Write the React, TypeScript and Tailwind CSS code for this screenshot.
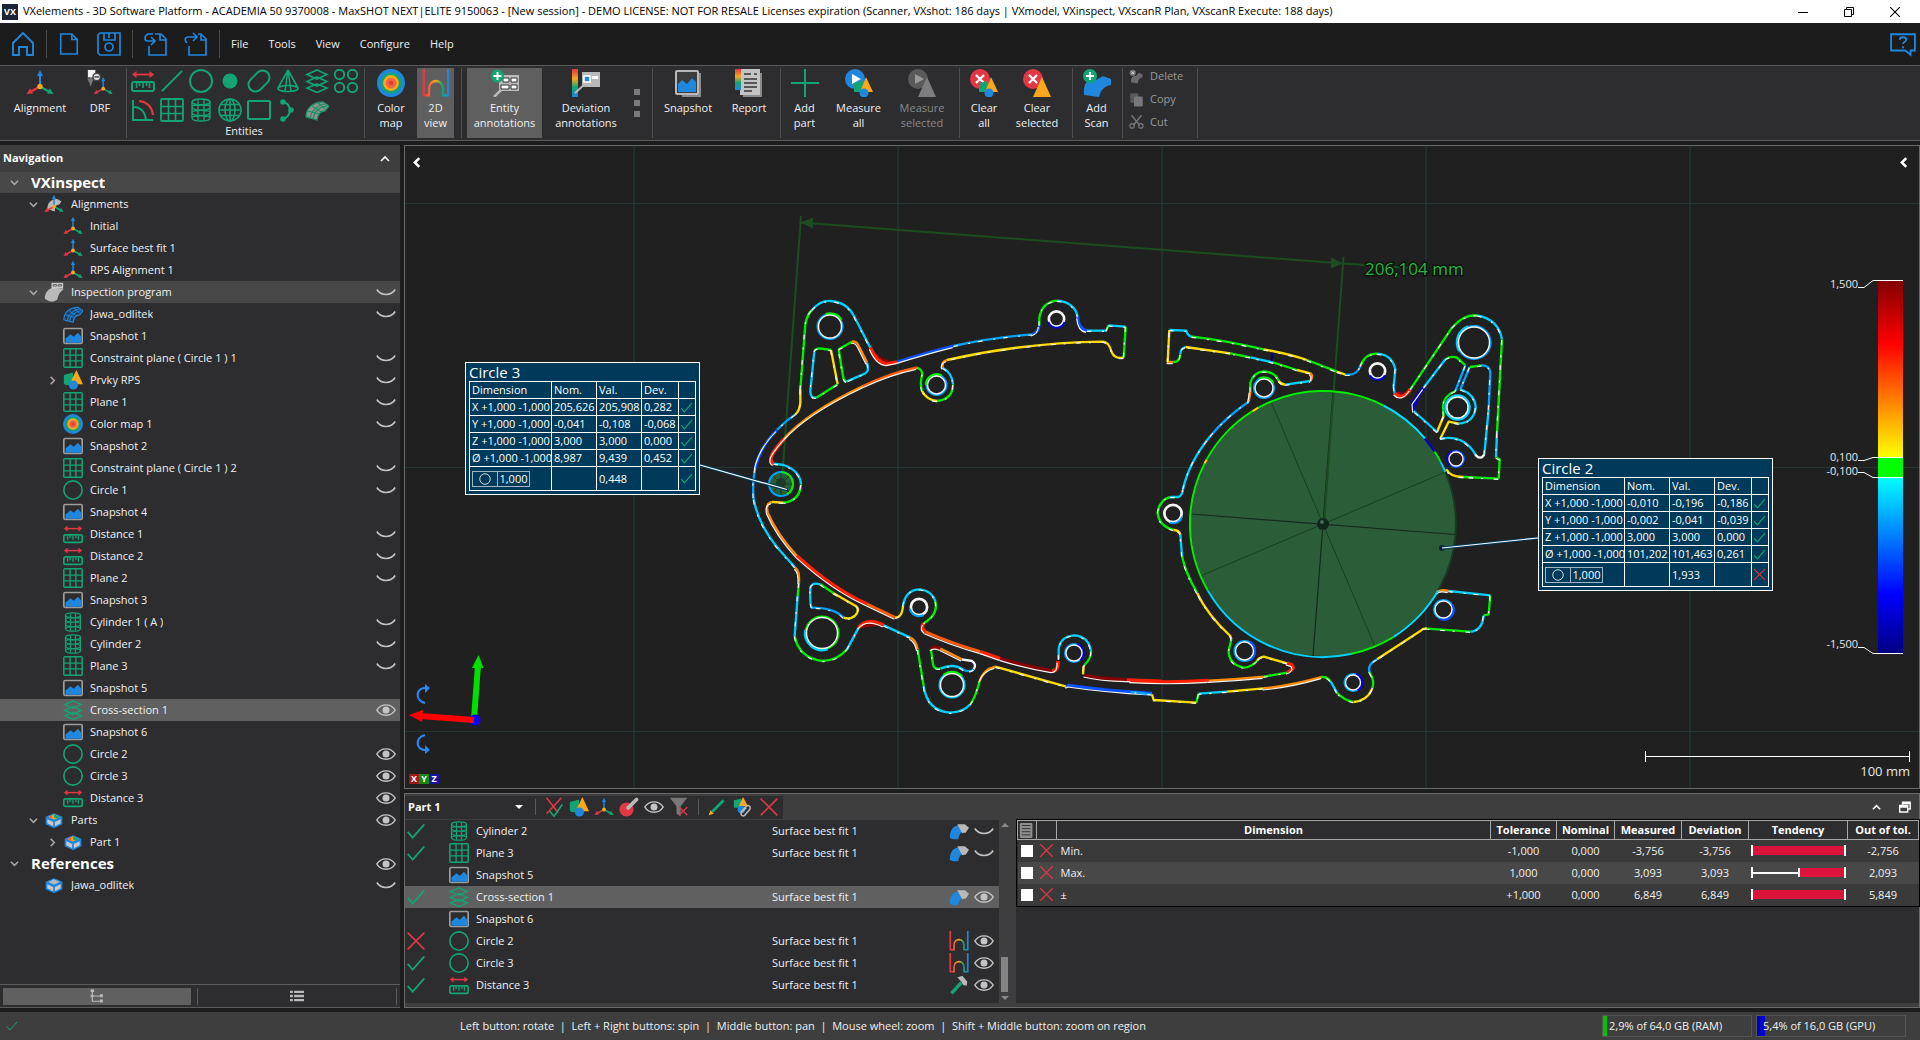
import React from "react";

/* ---------- icons ---------- */

type IconProps = { className?: string };
const G = "#12a573";
const B = "#1f87dd";
const R = "#e23744";
const O = "#fba71b";
const N = "#b9b9b9";

function Svg({ className = "size-5", children, box = "0 0 24 24" }: { className?: string; children: React.ReactNode; box?: string }) {
  return (
    <svg viewBox={box} className={`${className} shrink-0`} fill="none" stroke="none" strokeWidth={1.6} aria-hidden="true">
      {children}
    </svg>
  );
}

const AxesShape = () => (
  <>
    <path d="M12 15V5" stroke={B} strokeWidth={1.8} />
    <path d="M12 1l2.6 5H9.4z" fill={B} />
    <path d="M12 15l-8 4.5" stroke={R} strokeWidth={1.8} />
    <path d="M.5 21.5l3-5 2.600 4.500z" fill={R} />
    <path d="M12 15l8 4.500" stroke={G} strokeWidth={1.800} />
    <path d="M23.500 21.500l-3-5-2.600 4.500z" fill={G} />
    <circle cx="12" cy="15" r="2.300" fill={O} />
  </>
);
const Axes = ({ className }: IconProps) => <Svg className={className}><AxesShape /></Svg>;
const AxesPart = ({ className }: IconProps) => (
  <Svg className={className}><path d="M4 18c0-7 4-12 12-12l5 3-3 4c-4 0-5 3-5 8z" fill={N} /><AxesShape /></Svg>
);
const Drf = ({ className }: IconProps) => (
  <Svg className={className} box="0 0 28 30">
    <path d="M4 7v11M1.500 11l2.500 5 2.500-5z" stroke="#777" fill="#666" />
    <rect x="1" y="1" width="8" height="8" fill="#f2f2f2" />
    <circle cx="10.500" cy="8.500" r="4" fill="#e5e5e5" stroke="#444" /><path d="M8 8.500h5" stroke="#444" />
    <g transform="translate(7 8) scale(.87)"><AxesShape /></g>
  </Svg>
);
const Ruler = ({ className }: IconProps) => (
  <Svg className={className}>
    <path d="M3 5.500h18" stroke={R} strokeWidth={1.800} />
    <path d="M1 5.500l4.500-3.500v7zM23 5.500L18.500 2v7z" fill={R} />
    <rect x="1" y="13" width="22" height="9" rx="2" stroke={G} strokeWidth={2} />
    <path d="M5.500 14v5M8.500 14v3M12 14v5M15.500 14v3M18.500 14v5" stroke={G} />
  </Svg>
);
const LineI = ({ className }: IconProps) => <Svg className={className}><path d="M2 22L22 2" stroke={G} strokeWidth={1.800} /></Svg>;
const CircleI = ({ className }: IconProps) => <Svg className={className}><circle cx="12" cy="12" r="11" stroke={G} strokeWidth={1.900} /></Svg>;
const PointI = ({ className }: IconProps) => <Svg className={className}><circle cx="12" cy="12" r="7.500" fill={G} /></Svg>;
const SlotI = ({ className }: IconProps) => (
  <Svg className={className}><rect x="5" y="0" width="14" height="24" rx="7" transform="rotate(45 12 12)" stroke={G} strokeWidth={2} /></Svg>
);
const ConeI = ({ className }: IconProps) => (
  <Svg className={className}>
    <path d="M12 1L2 19M12 1l10 18M12 1L9 22M12 1l3 21" stroke={G} /><ellipse cx="12" cy="19.500" rx="10" ry="3" stroke={G} />
  </Svg>
);
const Layers = ({ className }: IconProps) => (
  <Svg className={className}>
    <path d="M12 1l10 4.500L12 10 2 5.500zM12 8l10 4.500L12 17 2 12.500zM12 15l10 4-10 4.500L2 19z" stroke={G} strokeWidth={1.700} />
  </Svg>
);
const FourCircles = ({ className }: IconProps) => (
  <Svg className={className}>
    {[5.5, 18.5].map((x) => [5.5, 18.5].map((y) => <circle key={`${x}-${y}`} cx={x} cy={y} r="4.700" stroke={G} strokeWidth={1.900} />))}
  </Svg>
);
const AngleI = ({ className }: IconProps) => (
  <Svg className={className}>
    <path d="M2 2v20h20M2 9c8 0 12 5 13 13" stroke={G} strokeWidth={1.900} /><path d="M8 3c8 1 13 6 14 14" stroke={R} strokeWidth={2.200} />
  </Svg>
);
const GridI = ({ className }: IconProps) => (
  <Svg className={className}>
    <rect x="1" y="1" width="22" height="22" stroke={G} strokeWidth={1.800} rx="1" /><path d="M8.500 1v22M15.500 1v22M1 8.500h22M1 15.500h22" stroke={G} />
  </Svg>
);
const Cylinder = ({ className }: IconProps) => (
  <Svg className={className}>
    <ellipse cx="12" cy="4" rx="9" ry="3" stroke={G} />
    <path d="M3 4v16c0 4 18 4 18 0V4M3 9c0 4 18 4 18 0M3 14.500c0 4 18 4 18 0M3 9c0-3 18-3 18 0M3 14.500c0-3 18-3 18 0M3 20c0-3 18-3 18 0M9 2v20M15 2v20" stroke={G} strokeWidth={1.400} />
  </Svg>
);
const Sphere = ({ className }: IconProps) => (
  <Svg className={className}>
    <circle cx="12" cy="12" r="11" stroke={G} /><ellipse cx="12" cy="12" rx="5" ry="11" stroke={G} />
    <path d="M12 1v22M1 12h22M3 6.500h18M3 17.500h18" stroke={G} />
  </Svg>
);
const RectI = ({ className }: IconProps) => <Svg className={className}><rect x="1" y="3" width="22" height="18" rx="1" stroke={G} strokeWidth={2} /></Svg>;
const CurveI = ({ className }: IconProps) => (
  <Svg className={className}>
    <path d="M7 4c9 2 9 14 0 17" stroke={G} strokeWidth={2} />
    <circle cx="7" cy="4" r="2.800" fill={G} /><circle cx="15" cy="12" r="2.800" fill={G} /><circle cx="7" cy="21" r="2.800" fill={G} />
  </Svg>
);
const MeshSurface = ({ className, fill = "#8f9692", line = "#1f8f66" }: IconProps & { fill?: string; line?: string }) => (
  <Svg className={className}>
    <path d="M1 19C1 10 8 4 18 4l6 4-4 5c-5 0-7 3-8 9z" fill={fill} stroke={line} strokeWidth={1.300} />
    <path d="M3 13l11 3M7 8l9 6M13 5l7 6M5 21C6 13 12 7 20 6M8 21c1-8 7-12 14-13" stroke={line} strokeWidth={1.200} />
  </Svg>
);
const ColorMap = ({ className }: IconProps) => (
  <Svg className={className}>
    <circle cx="12" cy="12" r="12" fill={B} /><circle cx="12" cy="12" r="9" fill={G} /><circle cx="12" cy="12" r="6.800" fill={O} />
    <circle cx="12" cy="12" r="4.500" fill="#f5653c" /><circle cx="12" cy="12" r="2" fill={R} />
  </Svg>
);
const View2D = ({ className }: IconProps) => (
  <Svg className={className}>
    <defs>
      <linearGradient id="v2d" x1="0" x2="1" y1="0" y2="0">
        <stop offset="0" stopColor={R} /><stop offset=".25" stopColor="#f5653c" /><stop offset=".5" stopColor={O} /><stop offset=".75" stopColor={G} /><stop offset="1" stopColor={B} />
      </linearGradient>
    </defs>
    <path d="M1.500 0v22.500h4.500V17c0-9 12-9 12 0v5.500h4.500V0" stroke="url(#v2d)" strokeWidth={2} />
  </Svg>
);
const EntityAnn = ({ className }: IconProps) => (
  <Svg className={className} box="0 0 28 28">
    <path d="M3 28l8-8" stroke={N} strokeWidth={2.500} /><path d="M8 6h20v16H10l-2-2z" fill={N} />
    <path d="M12 9h6v4h-6zM20 9h6v4h-6zM10 16h8v4h-8zM20 16h6v4h-6z" fill="#fff" stroke="#333" strokeWidth={1} />
    <circle cx="6.500" cy="7" r="6.500" fill={G} /><path d="M6.500 3v8M2.500 7h8" stroke="#fff" strokeWidth={2} />
  </Svg>
);
const DeviationAnn = ({ className }: IconProps) => (
  <Svg className={className} box="0 0 28 28">
    <defs>
      <linearGradient id="dev" x1="0" x2="0" y1="0" y2="1">
        <stop offset="0" stopColor={R} /><stop offset=".35" stopColor={O} /><stop offset=".65" stopColor={G} /><stop offset="1" stopColor={B} />
      </linearGradient>
    </defs>
    <rect x="0" y="0" width="6" height="28" fill="url(#dev)" />
    <path d="M3 24l10-9" stroke={N} strokeWidth={2} /><rect x="10" y="3" width="18" height="15" fill={N} />
    <rect x="12" y="7" width="6" height="6" fill={B} stroke="#fff" /><path d="M20 7h6v3h-6z" fill="#fff" />
  </Svg>
);
const SnapshotBig = ({ className }: IconProps) => (
  <Svg className={className} box="0 0 28 28">
    <path d="M6 4h21v24H8z" fill="#8b8b8b" /><rect x="2" y="2" width="22" height="23" rx="1" fill="#3c3c3c" stroke={N} strokeWidth={2} />
    <path d="M4 23V15l4-4 5 4 5-6 4 4v10z" fill={B} />
  </Svg>
);
const Snapshot = ({ className }: IconProps) => (
  <Svg className={className}>
    <rect x="1" y="3" width="22" height="18" rx="1.500" stroke="#9c9c9c" strokeWidth={2} />
    <path d="M3 20v-5l6-5 4 3 5-5 4 5v7z" fill={B} />
  </Svg>
);
const ReportI = ({ className }: IconProps) => (
  <Svg className={className} box="0 0 28 28">
    <path d="M8 4h19v24H8z" fill="#8b8b8b" /><rect x="5" y="0" width="20" height="26" fill="#c4c4c4" />
    <rect x="0" y="0" width="6" height="21" fill="url(#dev)" />
    <path d="M9 5h7M19 5h3M9 10h13M9 14h13M9 18h13M9 22h8" stroke="#333" strokeWidth={1.700} />
  </Svg>
);
const PlusI = ({ className }: IconProps) => <Svg className={className} box="0 0 28 28"><path d="M14 0v28M0 14h28" stroke={G} strokeWidth={2} /></Svg>;
const Shapes = ({ dim = false, cube = true }: { dim?: boolean; cube?: boolean }) => (
  <>
    {cube && <path d="M9 14l9-2v11H9z" fill={dim ? "#777" : G} />}
    <path d={cube ? "M21 8l7 15H15z" : "M19 8l9 20H10z"} fill={dim ? "#7d7d7d" : O} />
    {cube && <circle cx="19" cy="24" r="4.500" fill={dim ? "#777" : B} />}
  </>
);
const MeasureI = ({ className, dim = false }: IconProps & { dim?: boolean }) => (
  <Svg className={className} box="0 0 28 28">
    <circle cx="10" cy="10" r="10" fill={dim ? "#5a5a5a" : B} /><path d="M7 5l9 5-9 5z" fill={dim ? "#999" : "#fff"} />
    <Shapes dim={dim} cube={!dim} />
  </Svg>
);
const ClearI = ({ className, all = false }: IconProps & { all?: boolean }) => (
  <Svg className={className} box="0 0 28 28">
    <circle cx="10" cy="10" r="10" fill={R} /><path d="M6 6l8 8M14 6l-8 8" stroke="#fff" strokeWidth={2.200} /><Shapes cube={all} />
  </Svg>
);
const AddScan = ({ className }: IconProps) => (
  <Svg className={className} box="0 0 28 28">
    <path d="M1 26C0 12 6 10 13 11l7-4 8 3v6c-6 1-10 4-12 12z" fill={B} />
    <circle cx="7" cy="7" r="7" fill={G} /><path d="M7 3v8M3 7h8" stroke="#fff" strokeWidth={2} />
  </Svg>
);
const DeleteI = ({ className }: IconProps) => (
  <Svg className={className}><path d="M3 21c0-8 3-10 8-10l5-5 6 3-1 5c-5 0-6 4-7 9z" fill="#6b6b6b" /><circle cx="6" cy="6" r="5" fill="#777" /><path d="M4 4l4 4M8 4L4 8" stroke="#ddd" /></Svg>
);
const CopyI = ({ className }: IconProps) => (
  <Svg className={className}><rect x="2" y="2" width="13" height="15" rx="2" fill="#585858" /><rect x="8" y="7" width="14" height="16" rx="2" fill="#777" /></Svg>
);
const CutI = ({ className }: IconProps) => (
  <Svg className={className}><path d="M4 2l13 16M20 2L7 18" stroke="#777" strokeWidth={2.200} /><circle cx="5" cy="19" r="3.500" stroke="#777" strokeWidth={2} /><circle cx="19" cy="19" r="3.500" stroke="#777" strokeWidth={2} /></Svg>
);
const Program = ({ className }: IconProps) => (
  <Svg className={className}>
    <path d="M1 20C1 12 6 8 11 7l13 2c-5 2-7 7-8 12-4 3-8 4-15-1z" fill={N} />
    <rect x="9" y="1" width="14" height="7" fill="#ccc" /><path d="M11 3h4v2h-4zM17 3h4v2h-4z" stroke="#555" strokeWidth={1} />
  </Svg>
);
const Feature = ({ className }: IconProps) => (
  <Svg className={className}>
    <path d="M1 6l11-3v13c-3 2-9 4-11 0z" fill={G} /><path d="M16 0l8 17H8z" fill={O} /><circle cx="12.500" cy="18" r="5.500" fill={B} />
  </Svg>
);
const PartI = ({ className, colored = true }: IconProps & { colored?: boolean }) => (
  <Svg className={className}>
    <path d="M12 4l10 4v9l-10 5-10-5V8z" fill={B} />
    <path d="M12 5l7 3.500-7 3-7-3z" fill={colored ? O : N} />{colored && <path d="M12 5l7 3.500-4 1.700-3-1.200z" fill={G} />}
    {colored && <path d="M5 8.500l5-2.500v5z" fill="#f5653c" />}
    <path d="M4 11l7 3.500v5L4 16zM20 11l-7 3.500v5l7-3.500z" fill="#c9c9c9" />
  </Svg>
);
const Eye = ({ className }: IconProps) => (
  <Svg className={className}>
    <path d="M1 12C6 2.500 18 2.500 23 12 18 21.500 6 21.500 1 12z" stroke="#c4c4c4" strokeWidth={1.900} transform="translate(0 1.500) scale(1 .88)" />
    <circle cx="12" cy="12" r="4.200" fill="#c4c4c4" />
  </Svg>
);
const EyeClosed = ({ className }: IconProps) => (
  <Svg className={className}><path d="M1 9c5 8 17 8 22 0" stroke="#c4c4c4" strokeWidth={1.900} /></Svg>
);
const Check = ({ className }: IconProps) => <Svg className={className}><path d="M2 13l6 7L22 4" stroke={G} strokeWidth={2} /></Svg>;
const Cross = ({ className }: IconProps) => <Svg className={className}><path d="M2 2l20 20M22 2L2 22" stroke={R} strokeWidth={1.900} /></Svg>;
const CheckCross = ({ className }: IconProps) => (
  <Svg className={className}><path d="M3 1l14 18M21 1L3 20" stroke={R} strokeWidth={1.800} /><path d="M7 17l5 6L22 9" stroke={G} strokeWidth={2} /></Svg>
);
const Probe = ({ className }: IconProps) => (
  <Svg className={className}><circle cx="9" cy="15" r="8.500" fill={R} /><path d="M11 13L21 3" stroke={N} strokeWidth={4.500} strokeLinecap="round" /></Svg>
);
const Funnel = ({ className }: IconProps) => (
  <Svg className={className}><path d="M1 1h21l-8 10v12l-5-3v-9z" fill="#777" /><path d="M12 12l10 10M22 12L12 22" stroke={R} /></Svg>
);
const Pencil = ({ className }: IconProps) => (
  <Svg className={className}><path d="M6 18L20 4" stroke={G} strokeWidth={3.500} /><path d="M2 22l2-6 4 4z" fill={O} /></Svg>
);
const Linked = ({ className }: IconProps) => (
  <Svg className={className}><path d="M1 4l9-2v11H1z" fill={G} /><path d="M12 0l6 11H7z" fill={O} /><circle cx="10" cy="15" r="4.500" fill={B} /><path d="M9 19l7-8c3-2 6 1 4 4l-6 7c-3 2-5-1-4-3l6-6" stroke={N} strokeWidth={1.800} /></Svg>
);
const SurfacePair = ({ className }: IconProps) => (
  <Svg className={className}><path d="M1 20C1 11 5 6 11 5l7 7c-4 1-6 5-7 10-4 0-7 0-10-2z" fill={B} /><path d="M10 4h9l5 4-4 6c-2 0-3 0-4 1z" fill={N} /></Svg>
);
const Hammer = ({ className }: IconProps) => (
  <Svg className={className}><path d="M3 22L15 9" stroke={G} strokeWidth={4} /><path d="M10 3l6-2 6 7-1 5-4-1-2-4z" fill={N} /></Svg>
);
const Chevron = ({ dir, className = "size-[9px]", weight = 1.7 }: { dir: "down" | "right" | "up" | "left"; className?: string; weight?: number }) => {
  const d = { down: "M1 3l4 4 4-4", up: "M1 7l4-4 4 4", right: "M3 1l4 4-4 4", left: "M7.500 1l-4 4 4 4" }[dir];
  return <Svg className={className} box="0 0 10 10"><path d={d} stroke="currentColor" strokeWidth={weight} /></Svg>;
};
const HomeI = ({ className }: IconProps) => <Svg className={className}><path d="M2 11L12 1l10 10v12h-6v-8H8v8H2z" stroke={B} strokeWidth={1.900} /></Svg>;
const NewI = ({ className }: IconProps) => <Svg className={className}><path d="M3 1h12l6 6v16H3zM15 1v6h6" stroke={B} strokeWidth={1.700} /></Svg>;
const SaveI = ({ className }: IconProps) => (
  <Svg className={className}><path d="M1 3l2-2h20v22H3l-2-2zM7 1v7h11V1M12 1v5" stroke={B} strokeWidth={1.700} /><circle cx="12" cy="15" r="4" stroke={B} strokeWidth={1.700} /></Svg>
);
const OpenI = ({ className }: IconProps) => (
  <Svg className={className}><path d="M11 2h6l5 5v16H5v-9M16 2v6h6" stroke={B} strokeWidth={1.700} /><path d="M9 2H4C0 4 0 9 4 9h6M7 5l4 4-4 4" stroke={B} strokeWidth={1.700} /></Svg>
);
const ExportI = ({ className }: IconProps) => (
  <Svg className={className}><path d="M14 2h3l5 5v16H5v-9M17 3v5h5" stroke={B} strokeWidth={1.700} /><path d="M3 11C0 8 1 5 4 5h8M9 1l4 4-4 4" stroke={B} strokeWidth={1.700} /></Svg>
);

/* ---------- title and menu ---------- */

function TitleBar() {
  return (
    <header className="flex h-[23px] shrink-0 items-center bg-white pl-0.5 text-black">
      <span className="flex size-4 items-center justify-center bg-[#1c2536] text-[9px] font-bold text-white">VX</span>
      <h1 className="ml-[5px] truncate">
        VXelements - 3D Software Platform - ACADEMIA 50 9370008 - MaxSHOT NEXT|ELITE 9150063 - [New session] - DEMO LICENSE: NOT FOR RESALE Licenses expiration (Scanner, VXshot: 186 days | VXmodel, VXinspect, VXscanR Plan, VXscanR Execute: 188 days)
      </h1>
      <div className="mr-0.5 ml-auto flex">
        <button aria-label="Minimize" className="flex w-[46px] justify-center"><Svg className="size-[10px]" box="0 0 10 10"><path d="M0 5.500h10" stroke="#000" strokeWidth={1} /></Svg></button>
        <button aria-label="Restore" className="flex w-[46px] justify-center"><Svg className="size-[10px]" box="0 0 10 10"><path d="M.5 2.500h7v7h-7zM2.500 2.500v-2h7v7h-2" stroke="#000" strokeWidth={1} /></Svg></button>
        <button aria-label="Close" className="flex w-[46px] justify-center"><Svg className="size-[10px]" box="0 0 10 10"><path d="M0 0l10 10M10 0L0 10" stroke="#000" strokeWidth={1.100} /></Svg></button>
      </div>
    </header>
  );
}

const Sep = () => <span className="mx-[11px] h-7 w-px bg-[#4a4a4a]" />;

function MenuBar() {
  return (
    <nav className="flex h-[42px] shrink-0 items-center bg-[#1c1c1c] pl-[11px]">
      <button aria-label="Home"><HomeI className="size-6" /></button>
      <Sep />
      <button aria-label="New"><NewI className="h-6 w-[22px]" /></button>
      <button aria-label="Save" className="ml-[17px]"><SaveI className="size-6" /></button>
      <Sep />
      <button aria-label="Open"><OpenI className="size-6" /></button>
      <button aria-label="Export" className="ml-4"><ExportI className="size-6" /></button>
      <Sep />
      <div className="flex gap-5">
        {["File", "Tools", "View", "Configure", "Help"].map((m) => <button key={m}>{m}</button>)}
      </div>
      <button aria-label="Help" className="mr-1 ml-auto">
        <Svg className="size-[26px]"><path d="M1 3h22v15h-4v4l-5-4H1z" stroke={B} strokeWidth={1.700} /><path d="M9 8c0-3 6-3 6 0 0 2-3 2-3 4M12 14v2" stroke={B} strokeWidth={1.700} /></Svg>
      </button>
    </nav>
  );
}

/* ---------- ribbon ---------- */

function Tool({ icon, label, width, active, dim }: { icon: React.ReactNode; label: string[]; width: string; active?: boolean; dim?: boolean }) {
  return (
    <button disabled={dim} className={`flex h-[70px] shrink-0 flex-col items-center pt-px leading-[15px] ${width} ${active ? "bg-[#5f5f5f]" : ""} ${dim ? "text-[#8a8a8a]" : ""}`}>
      {icon}
      <span className="mt-[3px]">{label.map((l) => <span key={l} className="block whitespace-nowrap">{l}</span>)}</span>
    </button>
  );
}
const Bar = ({ className }: IconProps) => <span className={`h-[70px] w-px shrink-0 bg-[#4f4f4f] ${className ?? ""}`} />;

const entityIcons: [string, React.ReactNode][] = [
  ["Distance", <Ruler className="size-6" />], ["Line", <LineI className="size-6" />], ["Circle", <CircleI className="size-6" />], ["Point", <PointI className="size-6" />],
  ["Slot", <SlotI className="size-6" />], ["Cone", <ConeI className="size-6" />], ["Cross-section", <Layers className="size-6" />], ["Pattern", <FourCircles className="size-6" />],
  ["Angle", <AngleI className="size-6" />], ["Plane", <GridI className="size-6" />], ["Cylinder", <Cylinder className="size-6" />], ["Sphere", <Sphere className="size-6" />],
  ["Rectangle", <RectI className="size-6" />], ["Curve", <CurveI className="size-6" />], ["Surface", <MeshSurface className="size-6" />],
];

function Ribbon() {
  const big = "size-7";
  return (
    <div className="flex h-[76px] shrink-0 items-center border-y border-[#5a5a5a] bg-[#2d2d30]">
      <Tool width="w-20" icon={<Axes className={big} />} label={["Alignment"]} />
      <Tool width="w-10" icon={<Drf className={big} />} label={["DRF"]} />
      <Bar className="ml-1.5" />
      <div className="ml-px flex flex-col items-center">
        <div className="grid grid-cols-8 gap-y-[5px] pt-px">
          {entityIcons.map(([name, icon]) => <button key={name} aria-label={name} className="flex w-[29px] justify-center">{icon}</button>)}
        </div>
        <span className="mt-px leading-[15px]">Entities</span>
      </div>
      <Bar className="ml-1" />
      <Tool width="w-[52px]" icon={<ColorMap className={big} />} label={["Color", "map"]} />
      <Tool width="w-[37px]" active icon={<View2D className={big} />} label={["2D", "view"]} />
      <Bar className="ml-[7px]" />
      <Tool width="ml-[5px] w-[75px]" active icon={<EntityAnn className={big} />} label={["Entity", "annotations"]} />
      <Tool width="w-[88px]" icon={<DeviationAnn className={big} />} label={["Deviation", "annotations"]} />
      <button aria-label="More" className="ml-1 flex flex-col gap-[5px]">
        {[0, 1, 2].map((i) => <span key={i} className="block size-1.5 bg-[#7a7a7a]" />)}
      </button>
      <Bar className="ml-3" />
      <Tool width="w-[70px]" icon={<SnapshotBig className={big} />} label={["Snapshot"]} />
      <Tool width="w-[52px]" icon={<ReportI className={big} />} label={["Report"]} />
      <Bar className="ml-[5px]" />
      <Tool width="w-[47px]" icon={<PlusI className={big} />} label={["Add", "part"]} />
      <Tool width="w-[61px]" icon={<MeasureI className={big} />} label={["Measure", "all"]} />
      <Tool width="w-[66px]" dim icon={<MeasureI dim className={big} />} label={["Measure", "selected"]} />
      <Bar className="ml-1" />
      <Tool width="w-[48px]" icon={<ClearI all className={big} />} label={["Clear", "all"]} />
      <Tool width="w-[58px]" icon={<ClearI className={big} />} label={["Clear", "selected"]} />
      <Bar className="ml-1.5" />
      <Tool width="w-[47px]" icon={<AddScan className={big} />} label={["Add", "Scan"]} />
      <Bar className="ml-0.5" />
      <div className="flex h-[70px] w-[74px] flex-col justify-between pb-2 pl-1.5 text-[#9a9a9a]">
        <button className="flex items-center gap-1.5"><DeleteI className="size-[15px]" />Delete</button>
        <button className="flex items-center gap-1.5"><CopyI className="size-[15px]" />Copy</button>
        <button className="flex items-center gap-1.5"><CutI className="size-[15px]" />Cut</button>
      </div>
      <Bar />
    </div>
  );
}

/* ---------- navigation tree ---------- */

type Row = { text: string; level: 0 | 1 | 2; icon?: React.ReactNode; open?: "down" | "right"; eye?: "open" | "closed"; bg?: string };
const snap = <Snapshot />, grid = <GridI />, cyl = <Cylinder />, circ = <CircleI />, rul = <Ruler />, axes = <Axes />;
const rows: Row[] = [
  { text: "VXinspect", level: 0, open: "down", bg: "bg-[#484848]" },
  { text: "Alignments", level: 1, open: "down", icon: <AxesPart /> },
  { text: "Initial", level: 2, icon: axes },
  { text: "Surface best fit 1", level: 2, icon: axes },
  { text: "RPS Alignment 1", level: 2, icon: axes },
  { text: "Inspection program", level: 1, open: "down", icon: <Program />, eye: "closed", bg: "bg-[#484848]" },
  { text: "Jawa_odlitek", level: 2, icon: <MeshSurface fill="#22405e" line={B} />, eye: "closed" },
  { text: "Snapshot 1", level: 2, icon: snap },
  { text: "Constraint plane ( Circle 1 ) 1", level: 2, icon: grid, eye: "closed" },
  { text: "Prvky RPS", level: 2, open: "right", icon: <Feature />, eye: "closed" },
  { text: "Plane 1", level: 2, icon: grid, eye: "closed" },
  { text: "Color map 1", level: 2, icon: <ColorMap />, eye: "closed" },
  { text: "Snapshot 2", level: 2, icon: snap },
  { text: "Constraint plane ( Circle 1 ) 2", level: 2, icon: grid, eye: "closed" },
  { text: "Circle 1", level: 2, icon: circ, eye: "closed" },
  { text: "Snapshot 4", level: 2, icon: snap },
  { text: "Distance 1", level: 2, icon: rul, eye: "closed" },
  { text: "Distance 2", level: 2, icon: rul, eye: "closed" },
  { text: "Plane 2", level: 2, icon: grid, eye: "closed" },
  { text: "Snapshot 3", level: 2, icon: snap },
  { text: "Cylinder 1 ( A )", level: 2, icon: cyl, eye: "closed" },
  { text: "Cylinder 2", level: 2, icon: cyl, eye: "closed" },
  { text: "Plane 3", level: 2, icon: grid, eye: "closed" },
  { text: "Snapshot 5", level: 2, icon: snap },
  { text: "Cross-section 1", level: 2, icon: <Layers />, eye: "open", bg: "bg-[#606060]" },
  { text: "Snapshot 6", level: 2, icon: snap },
  { text: "Circle 2", level: 2, icon: circ, eye: "open" },
  { text: "Circle 3", level: 2, icon: circ, eye: "open" },
  { text: "Distance 3", level: 2, icon: rul, eye: "open" },
  { text: "Parts", level: 1, open: "down", icon: <PartI />, eye: "open" },
  { text: "Part 1", level: 2, open: "right", icon: <PartI /> },
  { text: "References", level: 0, open: "down", eye: "open" },
  { text: "Jawa_odlitek", level: 1, icon: <PartI colored={false} />, eye: "closed" },
];
const indent = ["pl-1", "pl-[23px]", "pl-[42px]"];

function TreeRow({ row }: { row: Row }) {
  return (
    <li className={`flex items-center pr-1 ${row.level === 0 ? "h-[21px]" : "h-[22px]"} ${indent[row.level]} ${row.bg ?? ""}`}>
      <span className="flex w-5 shrink-0 justify-center text-[#a8a8a8]">{row.open && <Chevron dir={row.open} />}</span>
      {row.icon && <span className={row.open || row.level === 2 ? "ml-px" : "ml-px"}>{row.icon}</span>}
      <span className={`ml-[7px] truncate ${row.level === 0 ? "text-[15px] font-bold text-white" : ""}`}>{row.text}</span>
      {row.eye && <button aria-label="Toggle visibility" className="ml-auto">{row.eye === "open" ? <Eye /> : <EyeClosed />}</button>}
    </li>
  );
}

function Navigation() {
  return (
    <aside className="flex w-[400px] shrink-0 flex-col bg-[#2d2d30]">
      <div className="flex h-[27px] items-center justify-between bg-[#3e3e3e] pr-2.5 pl-[3px] font-bold text-white">
        <h2>Navigation</h2><button aria-label="Collapse"><Chevron dir="up" className="size-2.5" /></button>
      </div>
      <ul className="min-h-0 flex-1 overflow-hidden">{rows.map((r, i) => <TreeRow key={i} row={r} />)}</ul>
      <div className="flex h-6 shrink-0 items-center border-y border-[#5a5a5a] px-[3px]">
        <button aria-label="Tree view" className="flex h-[17px] w-[188px] items-center justify-center bg-[#606060]">
          <Svg className="size-3.5"><path d="M4 1v20h16M4 12h16" stroke={N} strokeWidth={2} /><path d="M1 1h6v4H1zM17 9h5v5h-5zM17 18h5v5h-5zM1 10h5v4H1z" fill={N} /></Svg>
        </button>
        <span className="ml-1.5 h-[17px] w-px bg-[#5a5a5a]" />
        <button aria-label="List view" className="flex h-[17px] flex-1 items-center justify-center border-r border-[#5a5a5a]">
          <Svg className="size-3.5"><path d="M0 3h5v4H0zM7 3h17v4H7zM0 10h5v4H0zM7 10h17v4H7zM0 17h5v4H0zM7 17h17v4H7z" fill={N} /></Svg>
        </button>
      </div>
    </aside>
  );
}

/* ---------- 3D scene ---------- */

type Seg = [string, string];
const c = "#00cfff", s = "#00a4ff", g = "#00ee00", y = "#ffdc00", o = "#ff8a00", f = "#ff5a00", r = "#ff2000", d = "#860000", b = "#0a50ff", n = "#0000d0", w = "#f4f4f4";

/* Section profile, traced in third-of-a-pixel units and split at its colour changes. */
const leftTop: Seg[] = [
  ["M180 570L195 375Q200 345 215 332", g], ["M215 332Q240 303 270 305Q320 308 342 352L390 445", c],
  ["M390 445Q410 492 440 494L470 488", r], ["M470 488Q560 460 640 440", b], ["M640 440Q750 415 875 405", s],
  ["M875 405Q895 400 897 378", b], ["M897 378V355Q905 308 950 304", g], ["M950 304Q1002 308 1012 352", c], ["M1012 352Q1015 390 1040 394", b],
  ["M1040 394H1098", c], ["M1098 394L1104 378", g], ["M1104 378L1156 382", c], ["M1156 382L1150 475", g],
  ["M1150 475Q1120 480 1113 455Q1105 428 1088 427Q850 430 620 482", y], ["M620 482Q602 488 607 505", o],
  ["M607 505C625 515 638 535 638 555", c], ["M638 555Q638 600 590 605", g], ["M590 605Q560 603 545 575", y], ["M545 575Q538 550 546 525Q545 510 530 505", g],
  ["M530 505Q450 522 370 560", f], ["M370 560Q200 640 130 720", o], ["M130 720Q95 760 92 775Q90 790 100 793", r], ["M100 793L130 797Q180 815 182 855", c],
  ["M182 855Q178 905 130 910", g], ["M130 910L95 908", y],
  ["M180 570V610Q178 635 165 645", y], ["M165 645Q130 670 110 692", s], ["M110 692Q60 740 45 805", b], ["M45 805Q35 850 40 900", s],
  ["M222 455Q225 447 240 447L272 452", g], ["M272 452L292 555", y], ["M292 555L228 595", g], ["M228 595Q210 598 210 575L222 455", c],
  ["M295 450L335 427", g], ["M335 427Q348 425 355 440L380 490", o], ["M380 490Q388 515 375 522L318 547", c], ["M318 547Q310 545 308 530L295 450", g],
];
const leftBottom: Seg[] = [
  ["M40 60Q55 140 120 215L165 265", c], ["M165 265Q178 275 176 310", o], ["M176 310L172 350", g], ["M172 350L163 470", c],
  ["M163 470Q175 535 245 545Q290 545 320 510", g], ["M320 510L355 445", c], ["M355 445Q380 412 430 438", r], ["M430 438L510 475", c],
  ["M510 475Q525 480 532 510", o], ["M532 510L550 620", g], ["M550 620Q560 695 630 700Q670 698 690 675", c], ["M690 675Q705 655 718 605", g],
  ["M718 605Q730 570 765 562", o], ["M765 562L978 622", y], ["M978 622L985 618Q1100 635 1235 642", b],
  ["M95 68Q75 72 82 100Q110 165 170 230", o], ["M170 230Q280 330 380 374", r], ["M380 374L465 415", f], ["M465 415Q485 415 488 380", y],
  ["M488 380Q495 330 540 330Q575 335 585 365", c], ["M585 365Q595 405 550 432", g], ["M550 432Q540 445 555 458", r],
  ["M555 458Q640 495 720 517", f], ["M720 517L780 538", r], ["M780 538Q860 563 935 575", d], ["M935 575Q955 575 953 545", r],
  ["M955 540V510Q960 470 1003 468Q1045 472 1052 515", c], ["M1052 515Q1055 535 1030 560", g], ["M1030 560L1028 585", y], ["M1032 588Q1080 600 1160 602", d], ["M1160 602L1262 606", r],
  ["M210 325Q215 308 240 315", c], ["M240 315L280 342", g], ["M280 342L350 382", y], ["M350 382Q357 395 345 408Q330 422 310 415", y], ["M310 415Q280 385 215 385", s], ["M215 385Q208 380 210 325", c],
  ["M572 510Q580 500 600 508", d], ["M600 508L665 540", o], ["M665 540L695 545Q710 555 700 570", w], ["M700 570Q690 580 670 572", s], ["M670 572Q640 550 600 568", c], ["M600 568Q580 570 578 555L572 510", g],
];
const rightTop: Seg[] = [
  ["M158 750Q175 670 240 590", c], ["M240 590Q290 530 355 487", s], ["M355 487L360 455", o], ["M360 455V430Q370 398 400 396Q435 398 445 425", g],
  ["M445 425Q452 435 465 436", y], ["M465 436L540 425", c], ["M540 425Q550 410 540 402", o], ["M540 402L500 392", y], ["M500 392L430 370", g], ["M430 370L360 354", c], ["M360 354L300 342", g],
  ["M300 342L165 323", y], ["M165 323Q150 328 150 345", c], ["M150 345Q148 368 130 368", g], ["M130 368H112", o], ["M112 368L117 272", y], ["M117 272L168 274Q172 290 185 292", c],
  ["M185 292Q280 303 400 330", g], ["M400 330Q480 345 530 362", y], ["M530 362L620 397", g], ["M620 397L645 406", y], ["M645 406Q680 410 690 380", s],
  ["M690 380Q705 342 740 343", g], ["M740 343Q785 345 795 390L790 440", c], ["M790 440L793 465", s], ["M793 462Q815 485 840 450", r], ["M840 450L965 265", g], ["M965 265Q1000 225 1040 228", g],
  ["M1040 228Q1105 240 1115 300", c], ["M1115 300L1100 580", g], ["M1100 580L1097 655", c], ["M1097 655L1108 660L1105 718", g], ["M1105 718L1000 713", g], ["M1000 713Q960 714 948 690", y],
  ["M850 515L848 490L880 445", n], ["M880 445L945 360", c], ["M945 360Q960 348 980 355L1005 378", g], ["M1005 378L975 455", s], ["M975 455Q940 470 938 500L940 530", g], ["M940 530L920 578", y], ["M920 578L850 515", c],
  ["M1018 383L990 450", s], ["M990 450Q1035 465 1036 505Q1030 550 985 553", c], ["M985 553L955 547L930 598", y], ["M930 598Q1000 585 1035 645", c], ["M1035 645Q1050 665 1062 645", w],
  ["M1062 645L1075 510", c], ["M1075 510L1080 400Q1078 378 1055 378", s], ["M1055 378L1018 383", g],
];
const rightBottom: Seg[] = [
  ["M0 665Q120 672 235 664", r], ["M235 664Q320 660 400 652", o], ["M400 652L470 640", g], ["M470 640Q495 630 485 617L470 612", r], ["M470 612L400 592Q385 595 380 605", y],
  ["M380 605Q360 625 340 625Q295 615 295 575L303 540", g], ["M303 540L300 530Q230 465 200 400", y], ["M200 400Q165 340 155 290", g], ["M155 290L150 225", c], ["M150 225Q145 212 130 212", y],
  ["M130 212Q85 200 82 160Q88 120 120 113", g], ["M120 113H145Q155 108 158 90", c],
  ["M920 400Q930 388 955 395", o], ["M955 395L1080 408", c], ["M1080 408L1075 465L1060 468", g], ["M1060 468Q1055 515 1020 517", c], ["M1020 517L890 508", g], ["M890 508Q880 505 870 515L740 600", y],
  ["M740 600Q710 615 718 640", s], ["M718 640Q735 665 725 690", g], ["M725 690Q710 725 670 728", y], ["M670 728Q640 722 620 700", g], ["M620 700L600 665", c], ["M600 665Q590 652 575 653", g],
  ["M575 653Q480 680 400 687", o], ["M400 687L290 697", y], ["M290 697L205 703", c], ["M205 703L198 730", g], ["M198 730L70 722L65 705", y], ["M65 705L0 698", s],
];
/* x, y, radius, main colour, accent colour, accent start and end angle */
type Hole = [number, number, number, string, string, number, number];
const holes: Hole[] = [
  [830, 326.5, 12, s, g, 250, 330], [936.5, 385, 9.500, s, g, 180, 300], [1056.5, 319, 7.500, w, n, 20, 160],
  [822, 633, 16, g, c, 70, 190], [919, 607, 8, w, s, 60, 170], [952, 685, 12, c, g, 230, 320], [1074, 653, 8.500, s, n, 290, 50],
  [1264, 388, 9.500, s, g, 240, 330], [1377.5, 371, 7.500, w, n, 30, 150], [1474, 342.5, 16, s, c, 150, 250], [1457.500, 407.500, 11, s, c, 0, 360], [1456, 459, 7.500, b, n, 130, 240],
  [1173, 513.5, 8.500, w, s, 20, 110], [1244.5, 651, 9.500, s, b, 300, 60], [1353, 682.500, 8, s, n, 290, 60], [1443.5, 609.5, 9, s, b, 330, 110],
];

function arc(cx: number, cy: number, rad: number, from: number, to: number) {
  const end = to < from ? to + 360 : to;
  const p = (a: number) => `${(cx + rad * Math.cos((a * Math.PI) / 180)).toFixed(1)} ${(cy + rad * Math.sin((a * Math.PI) / 180)).toFixed(1)}`;
  const mid = (from + end) / 2;
  return `M${p(from)}A${rad} ${rad} 0 0 1 ${p(mid)}A${rad} ${rad} 0 0 1 ${p(end)}`;
}

/* Larger deviations are drawn with a heavier stroke. */
const weights: Record<string, number> = { [d]: 12, [r]: 11, [f]: 9, [b]: 9, [n]: 11, [o]: 7.5 };

function Profile({ segs, transform }: { segs: Seg[]; transform: string }) {
  return (
    <g transform={transform} strokeLinejoin="round">
      <g>{segs.map(([path, col], i) => <path key={i} d={path} stroke={col} strokeWidth={weights[col] ?? 7} transform="translate(1 -2)" />)}</g>
      <g stroke={w} strokeWidth={3.5}>
        {segs.map(([path, col], i) => <path key={i} d={path} strokeDasharray={weights[col] ? undefined : "14 32 6 24"} transform={weights[col] ? "translate(-2 3)" : undefined} />)}
      </g>
    </g>
  );
}

const rim: [number, number, string][] = [
  [30, 58, "#00dcff"], [58, 78, g], [78, 150, "#00d0ff"], [150, 207, g], [207, 209, y], [209, 238, g], [238, 241, y], [241, 297, g], [297, 320, "#00dcff"], [320, 327, n], [327, 332, g], [332, 337, c],
];

function Scene() {
  const cx = 1323, cy = 524, rad = 133;
  return (
    <svg className="absolute inset-0 size-full" fill="none" aria-label="Cross-section deviation view">
      <g transform="translate(-405 -146)">
        <g stroke="#1f2f30" strokeWidth={2}>
          {[634, 898, 1162, 1426, 1690].map((x) => <path key={x} d={`M${x} 140V800`} />)}
        </g>
        <g stroke="#223434" strokeWidth={1}>
          {[203.5, 467.5, 731.5].map((v) => <path key={v} d={`M400 ${v}H4000`} />)}
        </g>

        <circle cx={cx} cy={cy} r={rad} fill="#2b5d39" stroke="#173a20" strokeWidth={2} />
        <g stroke="#14421e" strokeWidth={1}>
          {[67, 157, 247, 337].map((a) => (
            <path key={a} d={`M${cx} ${cy}l${rad * Math.cos((a * Math.PI) / 180)} ${rad * Math.sin((a * Math.PI) / 180)}`} />
          ))}
        </g>
        <path d="M1191 514L1455 534.500M1333 392L1313 656" stroke="#16291f" strokeWidth={1.200} />

        <g stroke="#1b4d20" strokeWidth={2}>
          <path d="M801 216L782 480M801 222.500L1343 263.500L1410 268M1343.500 257L1324 524" />
          <path d="M801 222.500l12-5v11zM1343 263.500l-12-6v11z" fill="#1b4d20" stroke="none" />
        </g>

        <path d="M869 348Q880 360 900 363L888 366Q874 363 869 348z" fill={d} />
        <path d="M860 627Q868 617 884 625L862 628z" fill={d} />
        <path d="M1394 393Q1400 390 1406 394L1400 397z" fill={d} />
        <path d="M1412 403L1420 393L1417 405z" fill={n} />
        <path d="M1273 353L1271 362" stroke="#000080" strokeWidth={2} />
        <Profile segs={leftTop} transform="translate(740 200) scale(.33333)" />
        <Profile segs={leftBottom} transform="translate(740 480) scale(.33333)" />
        <Profile segs={rightTop} transform="translate(1130 240) scale(.33333)" />
        <Profile segs={rightBottom} transform="translate(1130 460) scale(.33333)" />
        <g strokeWidth={2}>{rim.map(([a, z, col]) => <path key={a} d={arc(cx, cy, rad, a, z)} stroke={col} />)}</g>

        {holes.map(([x, v, q, main, accent, a, z]) => (
          <g key={`${x}-${v}`}>
            <circle cx={x} cy={v} r={q + 0.5} stroke={main} strokeWidth={2} />
            <path d={arc(x, v, q + 1, a, z)} stroke={accent} strokeWidth={2.500} />
            <circle cx={x} cy={v} r={q - 0.5} stroke={w} strokeWidth={1.400} />
          </g>
        ))}

        <circle cx="781" cy="484" r="12" fill="#2b5d39" stroke={s} strokeWidth={2} />
        <path d={arc(781, 484, 12, 270, 60)} stroke={g} strokeWidth={2} />
        <path d="M781 473v22M770 484h22M773 476l16 16M789 476l-16 16" stroke="#173a20" strokeWidth={1} />
        <circle cx="781" cy="483" r="5" fill="#1c3a26" />
        <path d="M700 465L788 490" stroke="#003a5a" strokeWidth={3} /><path d="M700 465L787 489.500" stroke="#fff" strokeWidth={1.200} />
        <circle cx={cx} cy={cy} r="6" fill="#10261a" /><circle cx={cx - 1} cy={cy - 2} r="2" fill="#456b52" />
        <circle cx="1442" cy="548" r="3" fill="#0b2233" />
        <path d="M1442 548L1538 538" stroke="#003a5a" strokeWidth={3} /><path d="M1442 548L1538 538" stroke="#fff" strokeWidth={1.200} />

        <text x="1365" y="275" fontSize="17" fill="#2fb044" stroke="#0a140b" strokeWidth={3} paintOrder="stroke">206,104 mm</text>

        <path d="M474 719L478 665" stroke="#00e000" strokeWidth={6} /><path d="M472 668l6.500-13 5 13z" fill="#00e000" />
        <circle cx="475" cy="720" r="5.500" fill="#0000ff" />
        <path d="M474 720L420 716" stroke="#ff0000" strokeWidth={6} /><path d="M409 715l14-5-1 12z" fill="#ff0000" />
        <g stroke="#2b86f0" strokeWidth={2.200}>
          <path d="M425 703C414 700 416 687 427 688M425 735C414 738 416 751 427 750" />
        </g>
        <path d="M425 684l5 4-5 5zM425 745l5 5-5 4z" fill="#2b86f0" />
      </g>
    </svg>
  );
}

function Annotation({ title, data, total, ok, pos }: { title: string; data: string[][]; total: string; ok: boolean; pos: string }) {
  const cell = "border border-white pl-0.5 pr-0 whitespace-nowrap";
  return (
    <section className={`absolute w-[235px] border border-white bg-[#003a5a] px-[3px] pb-[3px] text-[11px] text-white ${pos}`}>
      <h3 className="h-[18px] text-[15px] leading-[18px]">{title}</h3>
      <table className="w-full table-fixed border-collapse leading-[14px]">
        <colgroup><col className="w-[82px]" /><col className="w-[45px]" /><col className="w-[45px]" /><col className="w-[37px]" /><col /></colgroup>
        <thead><tr className="h-[17px]">{["Dimension", "Nom.", "Val.", "Dev."].map((h) => <th key={h} className={`${cell} text-left font-normal`}>{h}</th>)}<th className={cell} aria-label="Status" /></tr></thead>
        <tbody>
          {data.map((row) => (
            <tr key={row[0]} className="h-[17px]">
              {row.map((v, i) => <td key={i} className={cell}>{v}</td>)}
              <td className="border border-white px-px"><Check className="size-[13px]" /></td>
            </tr>
          ))}
          <tr className="h-6">
            <td className="border border-white px-0.5">
              <span className="flex h-4 w-[58px] items-center border border-[#9fb6c4]">
                <span className="flex h-full w-[25px] items-center justify-center border-r border-[#9fb6c4]"><Svg className="size-3"><circle cx="12" cy="12" r="10.500" stroke="#fff" /></Svg></span>
                <span className="flex-1 text-center">1,000</span>
              </span>
            </td>
            <td className={cell} /><td className={cell}>{total}</td><td className={cell} />
            <td className="border border-white px-px">{ok ? <Check className="size-[13px]" /> : <Cross className="size-[13px]" />}</td>
          </tr>
        </tbody>
      </table>
    </section>
  );
}

function Legend() {
  return (
    <svg className="absolute top-[129px] right-4 h-[386px] w-[104px]" viewBox="0 0 104 386" fontSize="11" fill="#e6e6e6" aria-label="Deviation colour scale">
      <defs>
        <linearGradient id="scale" x1="0" x2="0" y1="0" y2="1">
          <stop offset="0" stopColor="#800000" /><stop offset=".17" stopColor="#ff0000" /><stop offset=".473" stopColor="#ffff00" /><stop offset=".473" stopColor="#00ff00" />
          <stop offset=".527" stopColor="#00ff00" /><stop offset=".527" stopColor="#00ffff" /><stop offset=".84" stopColor="#0000ff" /><stop offset="1" stopColor="#000080" />
        </linearGradient>
      </defs>
      <rect x="79" y="5" width="25" height="374" fill="url(#scale)" />
      <path d="M59 12.500h6l9-7h30M59 185.500h6l9-3h30M59 197.500h6l9 5h30M59 372.500h6l9 6h30" fill="none" stroke="#fff" />
      <g textAnchor="end">
        <text x="59" y="13">1,500</text><text x="59" y="186">0,100</text><text x="59" y="200">-0,100</text><text x="59" y="373">-1,500</text>
      </g>
    </svg>
  );
}

function Viewport() {
  return (
    <main className="relative min-h-0 flex-1 overflow-hidden border border-[#6a6a6a] bg-[#202020]">
      <Scene />
      <button aria-label="Previous view" className="absolute top-[11px] left-1.5 text-white"><Chevron dir="left" weight={2.3} className="size-[11px]" /></button>
      <button aria-label="Open side panel" className="absolute top-[11px] right-2.5 text-white"><Chevron dir="left" weight={2.3} className="size-[11px]" /></button>
      <Annotation title="Circle 3" pos="top-[216px] left-[60px]" ok total="0,448" data={[
        ["X +1,000 -1,000", "205,626", "205,908", "0,282"], ["Y +1,000 -1,000", "-0,041", "-0,108", "-0,068"],
        ["Z +1,000 -1,000", "3,000", "3,000", "0,000"], ["Ø +1,000 -1,000", "8,987", "9,439", "0,452"],
      ]} />
      <Annotation title="Circle 2" pos="top-[312px] left-[1133px]" ok={false} total="1,933" data={[
        ["X +1,000 -1,000", "-0,010", "-0,196", "-0,186"], ["Y +1,000 -1,000", "-0,002", "-0,041", "-0,039"],
        ["Z +1,000 -1,000", "3,000", "3,000", "0,000"], ["Ø +1,000 -1,000", "101,202", "101,463", "0,261"],
      ]} />
      <Legend />
      <div className="absolute right-[9px] bottom-2 w-[265px] text-right text-[13px] leading-[18px] text-[#e6e6e6]">
        <div className="flex h-[11px] items-center border-x border-white"><span className="h-px w-full bg-white" /></div>
        100 mm
      </div>
      <div className="absolute bottom-1 left-1 flex text-center text-[9px] leading-[10px] font-bold text-white">
        <span className="w-2.5 bg-[#a01818]">X</span><span className="w-2.5 bg-[#148a14]">Y</span><span className="w-2.5 bg-[#1414a0]">Z</span>
      </div>
    </main>
  );
}

/* ---------- lower panel ---------- */

type Item = { st?: "ok" | "bad"; icon: React.ReactNode; name: string; kind?: React.ReactNode; eye?: "open" | "closed"; sel?: boolean };
const items: Item[] = [
  { st: "ok", icon: cyl, name: "Cylinder 2", kind: <SurfacePair />, eye: "closed" },
  { st: "ok", icon: grid, name: "Plane 3", kind: <SurfacePair />, eye: "closed" },
  { icon: snap, name: "Snapshot 5" },
  { st: "ok", icon: <Layers />, name: "Cross-section 1", kind: <SurfacePair />, eye: "open", sel: true },
  { icon: snap, name: "Snapshot 6" },
  { st: "bad", icon: circ, name: "Circle 2", kind: <View2D />, eye: "open" },
  { st: "ok", icon: circ, name: "Circle 3", kind: <View2D />, eye: "open" },
  { st: "ok", icon: rul, name: "Distance 3", kind: <Hammer />, eye: "open" },
];
const tools: [string, React.ReactNode][] = [
  ["Status", <CheckCross />], ["Entities", <Feature />], ["Alignments", <Axes />], ["Probe", <Probe />], ["Visibility", <Eye />], ["Clear filter", <Funnel />],
];
const editTools: [string, React.ReactNode][] = [["Edit", <Pencil />], ["Linked entities", <Linked />], ["Delete", <Cross />]];

const measures = [
  { name: "Min.", v: ["-1,000", "0,000", "-3,756", "-3,756"], out: "-2,756", half: false },
  { name: "Max.", v: ["1,000", "0,000", "3,093", "3,093"], out: "2,093", half: true },
  { name: "±", v: ["+1,000", "0,000", "6,849", "6,849"], out: "5,849", half: false },
];

function MeasureTable() {
  const th = "border-x border-[#a8a8a8] p-0 font-bold";
  return (
    <table className="w-full table-fixed border-collapse leading-4 outline outline-black">
      <colgroup>
        <col className="w-[19px]" /><col className="w-5" /><col /><col className="w-[66px]" /><col className="w-[58px]" /><col className="w-[67px]" /><col className="w-[67px]" /><col className="w-[99px]" /><col className="w-[71px]" />
      </colgroup>
      <thead>
        <tr className="h-[19px] border-y border-[#a8a8a8] bg-[#2d2d30] text-white">
          <th className={th} aria-label="Select"><Svg className="size-[15px]"><rect x="3" width="20" height="24" rx="2" fill="#8f8f8f" /><path d="M6 4h14M6 9h14M6 14h14M6 19h14" stroke="#333" /></Svg></th>
          <th className={th} aria-label="Status" />
          {["Dimension", "Tolerance", "Nominal", "Measured", "Deviation", "Tendency", "Out of tol."].map((h) => <th key={h} className={`${th} whitespace-nowrap`}>{h}</th>)}
        </tr>
      </thead>
      <tbody>
        {measures.map((m) => (
          <tr key={m.name} className={`h-[22px] text-center ${m.half ? "bg-[#484848]" : "bg-[#3a3a3a]"}`}>
            <td className="p-0"><input type="checkbox" aria-label={m.name} className="mx-auto block size-3 appearance-none bg-white" /></td>
            <td className="p-0"><Cross className="mx-auto size-[15px]" /></td>
            <td className="p-0 pl-1 text-left">{m.name}</td>
            {m.v.map((v, i) => <td key={i} className="p-0">{v}</td>)}
            <td className="p-0 px-0.5">
              <div className="flex h-[11px] items-center border-x-2 border-white">
                {m.half && <span className="h-0.5 w-1/2 bg-white" />}
                <span className={`h-[9px] flex-1 bg-[#dc143c] ${m.half ? "border-l-2 border-white" : ""}`} />
              </div>
            </td>
            <td className="p-0">{m.out}</td>
          </tr>
        ))}
      </tbody>
    </table>
  );
}

function LowerPanel() {
  return (
    <section className="flex h-[215px] shrink-0 flex-col border border-[#6a6a6a] bg-[#3e3e3e] pb-1">
      <div className="flex h-[26px] shrink-0 items-center pr-2">
        <div className="flex h-[23px] items-center bg-[#2d2d30] pr-1">
          <label className="relative flex items-center">
            <select aria-label="Part" className="w-[122px] appearance-none pl-[3px] font-bold text-white"><option>Part 1</option></select>
            <span className="pointer-events-none absolute right-1 border-x-4 border-t-4 border-x-transparent border-t-white" />
          </label>
          <span className="mr-2 ml-2 h-4 w-px bg-[#5a5a5a]" />
          <div className="flex gap-[5px]">{tools.map(([t, i]) => <button key={t} aria-label={t}>{i}</button>)}</div>
          <span className="mr-2 ml-[9px] h-4 w-px bg-[#5a5a5a]" />
          <div className="flex gap-1.5">{editTools.map(([t, i]) => <button key={t} aria-label={t}>{i}</button>)}</div>
        </div>
        <button aria-label="Collapse" className="ml-auto text-white"><Chevron dir="up" /></button>
        <button aria-label="Float" className="ml-[18px]"><Svg className="size-3" box="0 0 12 12"><path d="M.7 4.500h8v6.500h-8zM.7 6h8M3.500 4V1.200h7.700V8H9M3.500 2.500h7.700" stroke="#fff" strokeWidth={1.400} /></Svg></button>
      </div>
      <div className="flex min-h-0 flex-1">
        <ul className="w-[594px] shrink-0 bg-[#2d2d30]">
          {items.map((it) => (
            <li key={it.name} className={`flex h-[22px] items-center pr-[5px] pl-px ${it.sel ? "bg-[#606060]" : ""}`}>
              <span className="w-[43px]">{it.st === "ok" ? <Check /> : it.st === "bad" ? <Cross /> : null}</span>
              {it.icon}
              <span className="ml-[7px] flex-1">{it.name}</span>
              <span className="w-[177px]">{it.kind ? "Surface best fit 1" : ""}</span>
              <span className="w-5">{it.kind}</span>
              <span className="ml-[5px] w-5">{it.eye === "open" ? <Eye /> : it.eye === "closed" ? <EyeClosed /> : null}</span>
            </li>
          ))}
        </ul>
        <div className="flex w-[11px] shrink-0 flex-col items-center py-[3px]">
          <span className="border-x-4 border-b-4 border-x-transparent border-b-[#888]" />
          <span className="mt-auto mb-1 h-[35px] w-[7px] bg-[#848484]" />
          <span className="border-x-4 border-t-4 border-x-transparent border-t-[#888]" />
        </div>
        <div className="ml-1.5 min-w-0 flex-1 bg-[#2d2d30] pl-px"><MeasureTable /></div>
      </div>
    </section>
  );
}

function StatusBar() {
  return (
    <footer className="flex h-7 shrink-0 items-center bg-[#3e3e3e] pr-3.5 pl-1.5">
      <Check className="size-3" />
      <p className="ml-[442px] whitespace-pre">Left button: rotate  |  Left + Right buttons: spin  |  Middle button: pan  |  Mouse wheel: zoom  |  Shift + Middle button: zoom on region</p>
      <div className="ml-auto flex gap-1">
        <div className="flex h-[22px] w-[150px] items-center border border-[#555]"><span className="h-full w-1 bg-[#00c400]" /><span className="ml-0.5">2,9% of 64,0 GB (RAM)</span></div>
        <div className="relative flex h-[22px] w-[150px] items-center border border-[#555]"><span className="absolute h-full w-2 bg-[#0000c8]" /><span className="relative ml-1.5">5,4% of 16,0 GB (GPU)</span></div>
      </div>
    </footer>
  );
}

export default function App() {
  return (
    <div className="flex h-screen flex-col overflow-hidden bg-[#1c1c1c] font-['Open_Sans','Noto_Sans',sans-serif] text-[11px] text-[#f0f0f0]">
      <TitleBar />
      <MenuBar />
      <Ribbon />
      <div className="flex min-h-0 flex-1 gap-1 pt-1 pb-1">
        <Navigation />
        <div className="flex min-w-0 flex-1 flex-col gap-1">
          <Viewport />
          <LowerPanel />
        </div>
      </div>
      <StatusBar />
    </div>
  );
}
